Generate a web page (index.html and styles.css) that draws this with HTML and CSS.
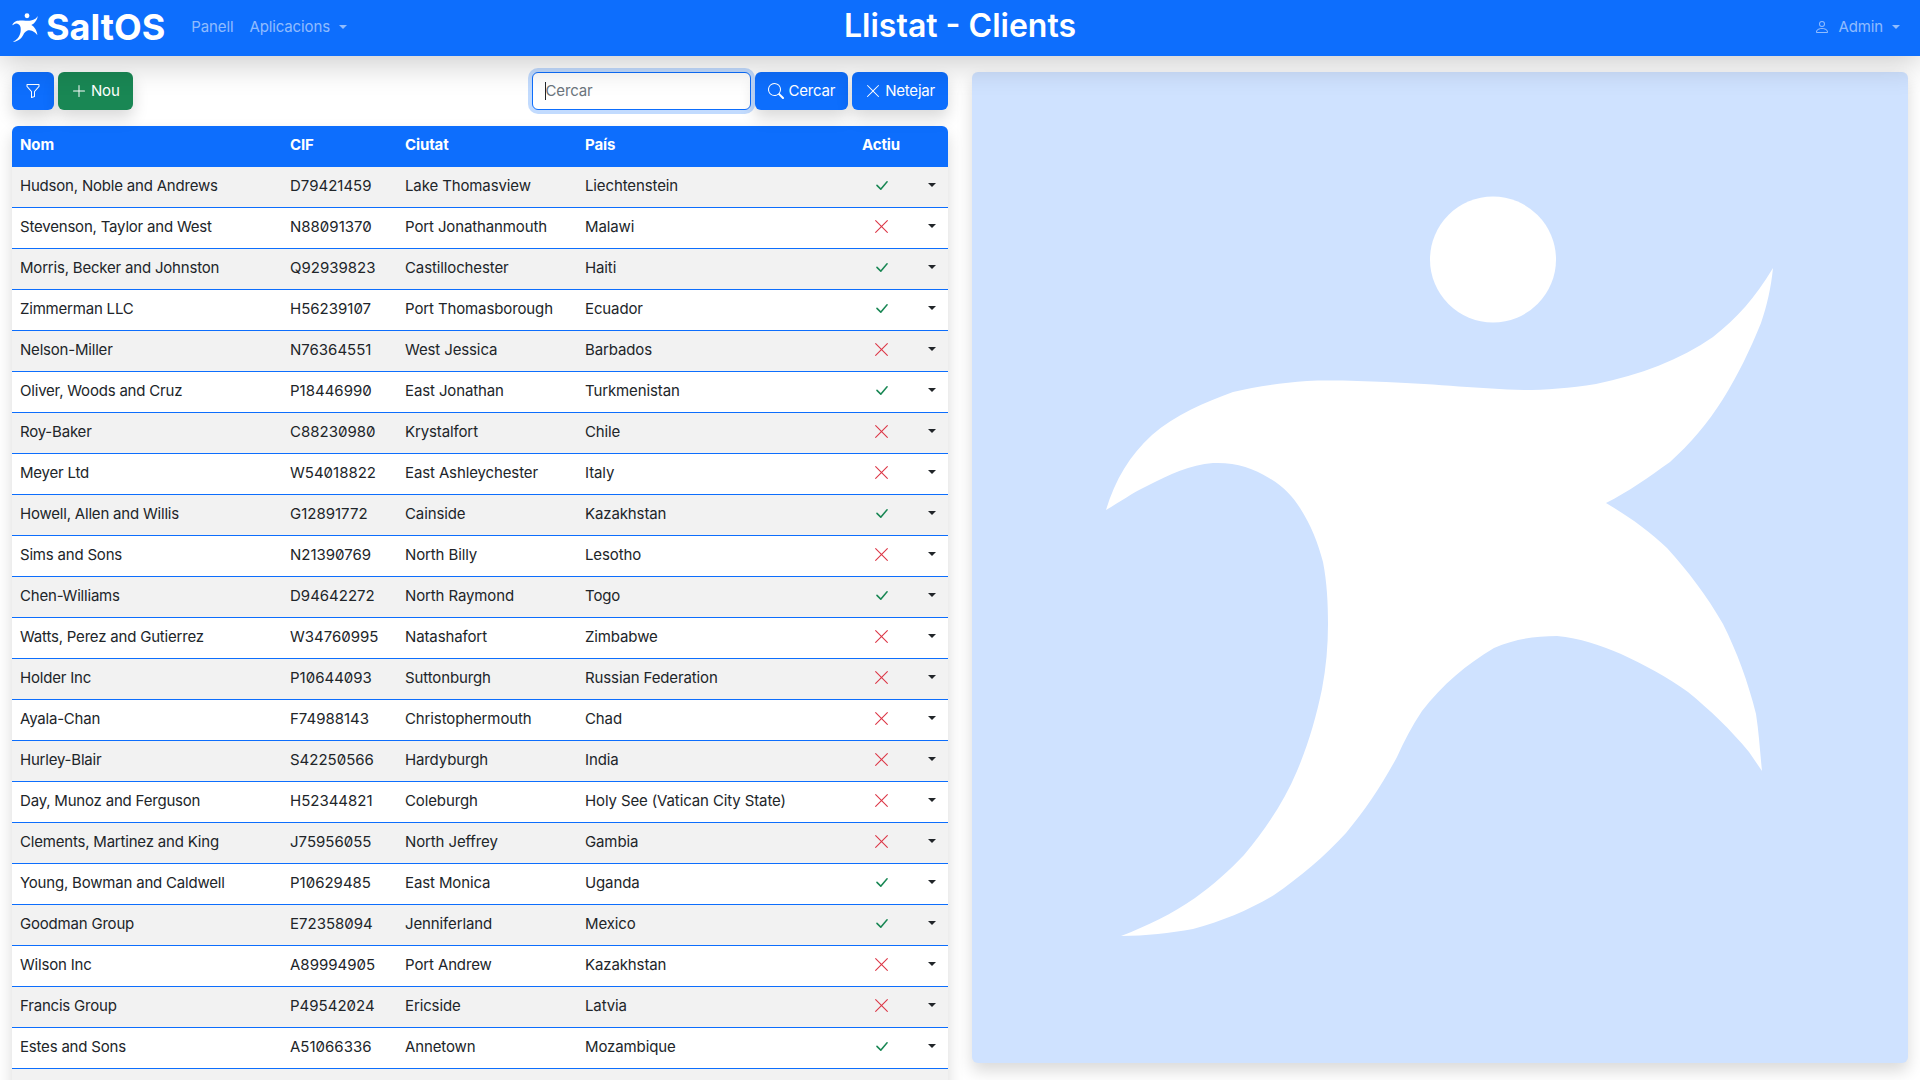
FILE: index.html
```html
<!DOCTYPE html>
<html lang="ca">

<head>
    <meta charset="UTF-8">
    <meta name="viewport" content="width=device-width, initial-scale=1.0">
    <title>Llistat - Clients</title>
    <link rel="stylesheet" href="styles.css">
</head>

<body>
    <!-- icones i logo, es fan servir amb <use> -->
    <svg class="defs" xmlns="http://www.w3.org/2000/svg">
        <symbol id="i-funnel" viewBox="0 0 16 16"><path d="M1.5 1.5A.5.5 0 0 1 2 1h12a.5.5 0 0 1 .5.5v2a.5.5 0 0 1-.128.334L10 8.692V13.5a.5.5 0 0 1-.342.474l-3 1A.5.5 0 0 1 6 14.5V8.692L1.628 3.834A.5.5 0 0 1 1.5 3.5v-2zm1 .5v1.308l4.372 4.858A.5.5 0 0 1 7 8.5v5.306l2-.666V8.5a.5.5 0 0 1 .128-.334L13.5 3.308V2h-11z"/></symbol>
        <symbol id="i-plus" viewBox="0 0 16 16"><path d="M8 2a.5.5 0 0 1 .5.5v5h5a.5.5 0 0 1 0 1h-5v5a.5.5 0 0 1-1 0v-5h-5a.5.5 0 0 1 0-1h5v-5A.5.5 0 0 1 8 2Z"/></symbol>
        <symbol id="i-search" viewBox="0 0 16 16"><path d="M11.742 10.344a6.5 6.5 0 1 0-1.397 1.398h-.001c.03.04.062.078.098.115l3.85 3.85a1 1 0 0 0 1.415-1.414l-3.85-3.85a1.007 1.007 0 0 0-.115-.1zM12 6.5a5.5 5.5 0 1 1-11 0 5.5 5.5 0 0 1 11 0z"/></symbol>
        <symbol id="i-x" viewBox="0 0 16 16"><path d="M2.146 2.854a.5.5 0 1 1 .708-.708L8 7.293l5.146-5.147a.5.5 0 0 1 .708.708L8.707 8l5.147 5.146a.5.5 0 0 1-.708.708L8 8.707l-5.146 5.147a.5.5 0 0 1-.708-.708L7.293 8 2.146 2.854Z"/></symbol>
        <symbol id="i-check" viewBox="0 0 16 16"><path d="M12.736 3.97a.733.733 0 0 1 1.047 0c.286.289.29.756.01 1.05L7.88 12.01a.733.733 0 0 1-1.065.02L3.217 8.384a.757.757 0 0 1 0-1.06.733.733 0 0 1 1.047 0l3.052 3.093 5.4-6.425a.247.247 0 0 1 .02-.022Z"/></symbol>
        <symbol id="i-person" viewBox="0 0 16 16"><path d="M8 8a3 3 0 1 0 0-6 3 3 0 0 0 0 6Zm2-3a2 2 0 1 1-4 0 2 2 0 0 1 4 0Zm4 8c0 1-1 1-1 1H3s-1 0-1-1 1-4 6-4 6 3 6 4Zm-1-.004c-.001-.246-.154-.986-.832-1.664C11.516 10.68 10.289 10 8 10c-2.29 0-3.516.68-4.168 1.332-.678.678-.83 1.418-.832 1.664h10Z"/></symbol>
        <symbol id="i-logo" viewBox="1100 190 680 752">
            <circle cx="1493" cy="259.5" r="63"/>
            <path d="M1773 268C1755 298 1737 318 1713 337C1680 360 1640 375 1596 384C1570 388 1545 390 1524 390C1480 389 1440 384 1386 382C1360 381 1330 380 1307 381C1280 383 1255 387 1233 392C1205 402 1175 415 1152 435C1130 455 1115 480 1106 510C1120 502 1132 493 1147 486C1170 474 1190 465 1213 463C1235 462 1253 468 1269 478C1284 487 1293 497 1300 508C1311 525 1318 543 1323 562C1327 583 1328 603 1328 624C1328 646 1326 668 1322 689C1316 718 1308 745 1297 771C1284 802 1265 830 1244 855C1230 870 1213 885 1195 898C1172 914 1147 926 1121 936C1146 936 1170 933 1193 929C1222 921 1249 910 1274 895C1300 877 1324 857 1346 833C1365 810 1382 785 1397 757C1404 741 1412 726 1422 711C1442 685 1467 664 1494 648C1515 639 1535 636 1557 636C1580 638 1600 645 1621 654C1645 665 1667 677 1688 692C1710 710 1731 730 1749 752L1762 771C1760 752 1759 733 1756 714C1748 682 1737 652 1723 624C1707 596 1688 571 1667 548C1648 530 1628 516 1606 503C1628 492 1649 477 1670 462C1690 444 1708 423 1723 399C1738 375 1750 350 1761 323C1767 305 1771 288 1773 268Z"/>
        </symbol>
    </svg>

    <nav class="navbar">
        <div class="nav-left">
            <a class="brand">
                <svg class="brand-logo"><use href="#i-logo"></use></svg>
                <span>SaltOS</span>
            </a>
            <a class="nav-link">Panell</a>
            <a class="nav-link caret">Aplicacions</a>
        </div>
        <h1 class="page-title">Llistat - Clients</h1>
        <a class="nav-link caret nav-user">
            <svg class="icon"><use href="#i-person"></use></svg>
            Admin
        </a>
    </nav>

    <main class="content">
        <section class="col-list">
            <div class="toolbar">
                <div class="btn-group">
                    <button class="btn btn-blue btn-filter"><svg class="icon"><use href="#i-funnel"></use></svg></button>
                    <button class="btn btn-green"><svg class="icon"><use href="#i-plus"></use></svg>Nou</button>
                </div>
                <div class="btn-group">
                    <div class="search-box"><span class="text-cursor"></span>Cercar</div>
                    <button class="btn btn-blue"><svg class="icon"><use href="#i-search"></use></svg>Cercar</button>
                    <button class="btn btn-blue"><svg class="icon"><use href="#i-x"></use></svg>Netejar</button>
                </div>
            </div>

            <table class="list">
                <colgroup>
                    <col class="c-nom">
                    <col class="c-cif">
                    <col class="c-ciutat">
                    <col class="c-pais">
                    <col class="c-actiu">
                    <col class="c-menu">
                </colgroup>
                <thead>
                    <tr><th>Nom</th><th>CIF</th><th>Ciutat</th><th>País</th><th class="center">Actiu</th><th></th></tr>
                </thead>
                <tbody>
                    <tr><td class="nom">Hudson, Noble and Andrews</td><td class="cif">D79421459</td><td>Lake Thomasview</td><td>Liechtenstein</td><td class="center"><svg class="icon yes"><use href="#i-check"></use></svg></td><td class="center"><span class="menu"></span></td></tr>
                    <tr><td class="nom">Stevenson, Taylor and West</td><td class="cif">N88091370</td><td>Port Jonathanmouth</td><td>Malawi</td><td class="center"><svg class="icon no"><use href="#i-x"></use></svg></td><td class="center"><span class="menu"></span></td></tr>
                    <tr><td class="nom">Morris, Becker and Johnston</td><td class="cif">Q92939823</td><td>Castillochester</td><td>Haiti</td><td class="center"><svg class="icon yes"><use href="#i-check"></use></svg></td><td class="center"><span class="menu"></span></td></tr>
                    <tr><td class="nom">Zimmerman LLC</td><td class="cif">H56239107</td><td>Port Thomasborough</td><td>Ecuador</td><td class="center"><svg class="icon yes"><use href="#i-check"></use></svg></td><td class="center"><span class="menu"></span></td></tr>
                    <tr><td class="nom">Nelson-Miller</td><td class="cif">N76364551</td><td>West Jessica</td><td>Barbados</td><td class="center"><svg class="icon no"><use href="#i-x"></use></svg></td><td class="center"><span class="menu"></span></td></tr>
                    <tr><td class="nom">Oliver, Woods and Cruz</td><td class="cif">P18446990</td><td>East Jonathan</td><td>Turkmenistan</td><td class="center"><svg class="icon yes"><use href="#i-check"></use></svg></td><td class="center"><span class="menu"></span></td></tr>
                    <tr><td class="nom">Roy-Baker</td><td class="cif">C88230980</td><td>Krystalfort</td><td>Chile</td><td class="center"><svg class="icon no"><use href="#i-x"></use></svg></td><td class="center"><span class="menu"></span></td></tr>
                    <tr><td class="nom">Meyer Ltd</td><td class="cif">W54018822</td><td>East Ashleychester</td><td>Italy</td><td class="center"><svg class="icon no"><use href="#i-x"></use></svg></td><td class="center"><span class="menu"></span></td></tr>
                    <tr><td class="nom">Howell, Allen and Willis</td><td class="cif">G12891772</td><td>Cainside</td><td>Kazakhstan</td><td class="center"><svg class="icon yes"><use href="#i-check"></use></svg></td><td class="center"><span class="menu"></span></td></tr>
                    <tr><td class="nom">Sims and Sons</td><td class="cif">N21390769</td><td>North Billy</td><td>Lesotho</td><td class="center"><svg class="icon no"><use href="#i-x"></use></svg></td><td class="center"><span class="menu"></span></td></tr>
                    <tr><td class="nom">Chen-Williams</td><td class="cif">D94642272</td><td>North Raymond</td><td>Togo</td><td class="center"><svg class="icon yes"><use href="#i-check"></use></svg></td><td class="center"><span class="menu"></span></td></tr>
                    <tr><td class="nom">Watts, Perez and Gutierrez</td><td class="cif">W34760995</td><td>Natashafort</td><td>Zimbabwe</td><td class="center"><svg class="icon no"><use href="#i-x"></use></svg></td><td class="center"><span class="menu"></span></td></tr>
                    <tr><td class="nom">Holder Inc</td><td class="cif">P10644093</td><td>Suttonburgh</td><td>Russian Federation</td><td class="center"><svg class="icon no"><use href="#i-x"></use></svg></td><td class="center"><span class="menu"></span></td></tr>
                    <tr><td class="nom">Ayala-Chan</td><td class="cif">F74988143</td><td>Christophermouth</td><td>Chad</td><td class="center"><svg class="icon no"><use href="#i-x"></use></svg></td><td class="center"><span class="menu"></span></td></tr>
                    <tr><td class="nom">Hurley-Blair</td><td class="cif">S42250566</td><td>Hardyburgh</td><td>India</td><td class="center"><svg class="icon no"><use href="#i-x"></use></svg></td><td class="center"><span class="menu"></span></td></tr>
                    <tr><td class="nom">Day, Munoz and Ferguson</td><td class="cif">H52344821</td><td>Coleburgh</td><td>Holy See (Vatican City State)</td><td class="center"><svg class="icon no"><use href="#i-x"></use></svg></td><td class="center"><span class="menu"></span></td></tr>
                    <tr><td class="nom">Clements, Martinez and King</td><td class="cif">J75956055</td><td>North Jeffrey</td><td>Gambia</td><td class="center"><svg class="icon no"><use href="#i-x"></use></svg></td><td class="center"><span class="menu"></span></td></tr>
                    <tr><td class="nom">Young, Bowman and Caldwell</td><td class="cif">P10629485</td><td>East Monica</td><td>Uganda</td><td class="center"><svg class="icon yes"><use href="#i-check"></use></svg></td><td class="center"><span class="menu"></span></td></tr>
                    <tr><td class="nom">Goodman Group</td><td class="cif">E72358094</td><td>Jenniferland</td><td>Mexico</td><td class="center"><svg class="icon yes"><use href="#i-check"></use></svg></td><td class="center"><span class="menu"></span></td></tr>
                    <tr><td class="nom">Wilson Inc</td><td class="cif">A89994905</td><td>Port Andrew</td><td>Kazakhstan</td><td class="center"><svg class="icon no"><use href="#i-x"></use></svg></td><td class="center"><span class="menu"></span></td></tr>
                    <tr><td class="nom">Francis Group</td><td class="cif">P49542024</td><td>Ericside</td><td>Latvia</td><td class="center"><svg class="icon no"><use href="#i-x"></use></svg></td><td class="center"><span class="menu"></span></td></tr>
                    <tr><td class="nom">Estes and Sons</td><td class="cif">A51066336</td><td>Annetown</td><td>Mozambique</td><td class="center"><svg class="icon yes"><use href="#i-check"></use></svg></td><td class="center"><span class="menu"></span></td></tr>
                    <tr class="empty"><td colspan="6"></td></tr>
                </tbody>
            </table>
        </section>

        <section class="col-panel">
            <svg class="panel-logo" viewBox="972 72 936 991"><use href="#i-logo" x="1100" y="190" width="680" height="752"></use></svg>
        </section>
    </main>
</body>

</html>
```
FILE: styles.css
```css
* {
    box-sizing: border-box;
    padding: 0;
    margin: 0;
}

html,
body {
    height: 1080px;
    overflow: hidden;
}

body {
    background: #fff;
    color: #212529;
    font-family: "Inter", "Noto Sans", sans-serif;
    font-size: 15px;
    line-height: 24px;
    letter-spacing: -0.12px;
    font-feature-settings: "zero";
}

.defs {
    display: none;
}

.icon {
    width: 16px;
    height: 16px;
    fill: currentColor;
    flex: none;
}

/* barra superior */
.navbar {
    position: relative;
    z-index: 2;
    display: flex;
    align-items: center;
    justify-content: space-between;
    height: 56px;
    padding: 0 12px;
    background: #0d6efd;
    box-shadow: 0 8px 32px rgba(0, 0, 0, 0.2);
}

.nav-left {
    display: flex;
    align-items: center;
}

.brand {
    display: flex;
    align-items: center;
    gap: 8px;
    margin-right: 18px;
    color: #fff;
    font-size: 36px;
    font-weight: 700;
    line-height: 52px;
    letter-spacing: 0;
    padding-bottom: 2px;
}

.brand-logo {
    width: 26px;
    height: 29px;
    fill: #fff;
}

.nav-link {
    display: flex;
    align-items: center;
    padding: 0 8px 2px;
    color: rgba(255, 255, 255, 0.55);
}

.caret::after {
    content: "";
    margin-left: 9px;
    border-top: 4.5px solid;
    border-left: 4.5px solid transparent;
    border-right: 4.5px solid transparent;
}

.nav-user {
    padding-right: 8px;
}

.nav-user .icon {
    margin-right: 8px;
}

.page-title {
    position: absolute;
    top: 8px;
    left: 0;
    right: 0;
    color: #fff;
    font-size: 32px;
    font-weight: 600;
    line-height: 36px;
    letter-spacing: 0;
    text-align: center;
}

/* dues columnes */
.content {
    display: flex;
    gap: 24px;
    padding: 16px 12px;
}

.col-list {
    width: 936px;
    flex: none;
}

.col-panel {
    width: 936px;
    height: 991px;
    flex: none;
    background: #cfe2ff;
    border-radius: 6px;
    box-shadow: 0 8px 16px rgba(0, 0, 0, 0.15);
}

.panel-logo {
    display: block;
    width: 100%;
    height: 100%;
    fill: #fff;
}

/* botons i cercador */
.toolbar {
    display: flex;
    justify-content: space-between;
    margin-bottom: 16px;
}

.btn-group {
    display: flex;
    gap: 4px;
}

.btn {
    display: flex;
    align-items: center;
    gap: 4px;
    height: 38px;
    padding: 0 13px;
    border: 0;
    border-radius: 6px;
    color: #fff;
    font: inherit;
    font-feature-settings: inherit;
    letter-spacing: -0.2px;
    box-shadow: 0 8px 16px rgba(0, 0, 0, 0.15);
}

.btn-blue {
    background: #0d6efd;
}

.btn-green {
    background: #198754;
}

.btn-filter {
    width: 42px;
    justify-content: center;
}

.search-box {
    display: flex;
    align-items: center;
    width: 219px;
    height: 38px;
    padding-left: 12px;
    border: 1px solid #0d6efd;
    border-radius: 6px;
    color: #6c757d;
    background: #fff;
    box-shadow: 0 0 0 4px rgba(13, 110, 253, 0.25);
}

.text-cursor {
    width: 1px;
    height: 18px;
    margin-right: -1px;
    background: #212529;
}

/* taula */
.list {
    width: 936px;
    table-layout: fixed;
    border-collapse: separate;
    border-spacing: 0;
    box-shadow: 0 8px 16px rgba(0, 0, 0, 0.15);
    border-radius: 6px 6px 0 0;
}

.c-nom { width: 270px; }
.c-cif { width: 115px; }
.c-ciutat { width: 180px; }
.c-pais { width: 270px; }
.c-actiu { width: 68px; }
.c-menu { width: 33px; }

.list th {
    height: 41px;
    padding: 6px 8px 10px;
    background: #0d6efd;
    color: #fff;
    font-weight: 700;
    text-align: left;
}

.list th:first-child {
    border-top-left-radius: 6px;
}

.list th:last-child {
    border-top-right-radius: 6px;
}

.list td {
    height: 41px;
    padding: 7px 8px 9px;
    border-bottom: 1px solid #0d6efd;
    white-space: nowrap;
}

.list .nom {
    letter-spacing: -0.2px;
}

.list .cif {
    letter-spacing: 0;
}

.list tbody tr:nth-child(odd) td {
    background: #f2f2f2;
}

.list .center {
    padding: 6px 0 10px;
    text-align: center;
}

.list td.center {
    padding: 0 0 5px;
}

.list td svg,
.menu {
    vertical-align: middle;
}

.list td svg {
    width: 17px;
    height: 17px;
}

.yes {
    color: #198754;
}

.no {
    color: #dc3545;
}

.menu {
    display: inline-block;
    border-top: 4.5px solid #212529;
    border-left: 4.5px solid transparent;
    border-right: 4.5px solid transparent;
}
```
